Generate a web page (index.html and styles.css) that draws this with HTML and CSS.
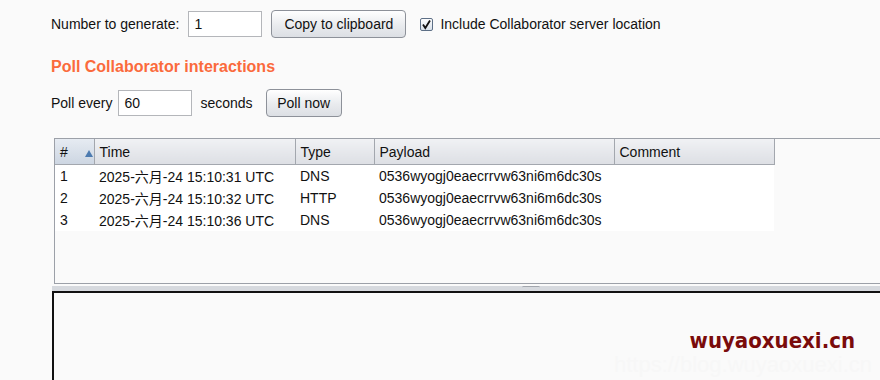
FILE: index.html
```html
<!DOCTYPE html>
<html lang="zh-CN">
<head>
  <meta charset="UTF-8">
  <title>Burp Collaborator client</title>
  <link rel="stylesheet" href="styles.css">
</head>
<body>
  <div class="top">
    <!-- 生成 payload -->
    <div class="row gen-row">
      <span>Number to generate:</span>
      <input class="field field-num" type="text" value="1">
      <button class="btn btn-copy">Copy to clipboard</button>
      <span class="check">
        <svg width="11" height="11" viewBox="0 0 11 11"><path d="M2 5.5 L4.3 9 L9 1.5" fill="none" stroke="#111" stroke-width="1.8"/></svg>
      </span>
      <span>Include Collaborator server location</span>
    </div>

    <h2 class="title">Poll Collaborator interactions</h2>

    <div class="row poll-row">
      <span>Poll every</span>
      <input class="field field-poll" type="text" value="60">
      <span>seconds</span>
      <button class="btn btn-poll">Poll now</button>
    </div>
  </div>

  <!-- 交互列表 -->
  <div class="list-pane">
    <table class="grid">
      <colgroup>
        <col class="c-num"><col class="c-time"><col class="c-type"><col class="c-payload"><col class="c-comment">
      </colgroup>
      <thead>
        <tr>
          <th class="sorted"># <span class="arrow"></span></th>
          <th>Time</th>
          <th>Type</th>
          <th>Payload</th>
          <th>Comment</th>
        </tr>
      </thead>
      <tbody>
        <tr><td>1</td><td>2025-六月-24 15:10:31 UTC</td><td>DNS</td><td>0536wyogj0eaecrrvw63ni6m6dc30s</td><td></td></tr>
        <tr><td>2</td><td>2025-六月-24 15:10:32 UTC</td><td>HTTP</td><td>0536wyogj0eaecrrvw63ni6m6dc30s</td><td></td></tr>
        <tr><td>3</td><td>2025-六月-24 15:10:36 UTC</td><td>DNS</td><td>0536wyogj0eaecrrvw63ni6m6dc30s</td><td></td></tr>
      </tbody>
    </table>
  </div>

  <div class="divider"><span class="grip"></span></div>

  <!-- 详情 -->
  <div class="detail-pane">
    <div class="mark">wuyaoxuexi.cn</div>
    <div class="mark-url">https://blog.wuyaoxuexi.cn</div>
  </div>
</body>
</html>
```

FILE: styles.css
```css
html, body {
    margin: 0;
    height: 380px;
    overflow: hidden;
}
body {
    background: #fafafa;
    font-family: "Liberation Sans", Arial, "Noto Sans CJK SC", sans-serif;
    font-size: 14px;
    color: #111;
}

.top {
    padding: 10px 0 0 51px;
}
.row {
    display: flex;
    align-items: center;
    height: 28px;
}
.gen-row span:first-child { margin-right: 9px; }

.field {
    box-sizing: border-box;
    height: 26px;
    border: 1px solid #b4b6ba;
    background: #fff;
    font: inherit;
    padding: 0 5px;
    color: #111;
    outline: none;
}
.field-num { width: 74px; margin-right: 9px; }
.field-poll { width: 74px; margin: 0 8px 0 6px; }

.btn {
    box-sizing: border-box;
    height: 28px;
    padding: 0 6px;
    border: 1px solid #8d9199;
    border-radius: 4px;
    background: linear-gradient(#ffffff, #e9ebee 55%, #dcdfe4);
    font: inherit;
    color: #111;
}
.btn-copy { width: 135px; margin-right: 14px; }
.btn-poll { width: 76px; margin-left: 13px; }

.check {
    box-sizing: border-box;
    width: 13px;
    height: 13px;
    border: 1px solid #5d6f86;
    border-radius: 2px;
    background: linear-gradient(#fdfdfe, #d9e1ea);
    display: flex;
    align-items: center;
    justify-content: center;
    margin-right: 7px;
}

.title {
    margin: 0;
    padding: 19px 0 0;
    height: 38px;
    line-height: 19px;
    box-sizing: border-box;
    font-size: 16px;
    font-weight: bold;
    color: #fa6a3c;
}
.poll-row { margin-top: 13px; }

/* 列表区域 */
.list-pane {
    margin: 21px 0 0 54px;
    width: 840px;
    height: 146px;
    box-sizing: border-box;
    border: 1px solid #9ca0a8;
}
.grid {
    border-collapse: collapse;
    table-layout: fixed;
    width: 719px;
}
.c-num { width: 39px; }
.c-time { width: 201px; }
.c-type { width: 79px; }
.c-payload { width: 240px; }
.c-comment { width: 160px; }

.grid th {
    height: 25px;
    padding: 0 0 0 5px;
    text-align: left;
    font-weight: normal;
    border-right: 1px solid #a3a7ae;
    border-bottom: 1px solid #a3a7ae;
    background: linear-gradient(#f0f1f4, #dddfe4);
}
.grid th.sorted {
    background: linear-gradient(#e6ebf2, #cdd6e2);
}
.arrow {
    display: inline-block;
    margin-left: 13px;
    width: 0;
    height: 0;
    border-left: 4px solid transparent;
    border-right: 4px solid transparent;
    border-bottom: 7px solid #4d7bb0;
}
.grid td {
    height: 22px;
    padding: 0 0 0 5px;
    background: #fff;
    white-space: nowrap;
}

.divider {
    margin: 2px 0 0 52px;
    height: 5px;
    background: #d6d9de;
    position: relative;
}
.grip {
    position: absolute;
    left: 470px;
    top: 0;
    width: 18px;
    height: 2px;
    border-top: 1px solid #a2a6ad;
    border-radius: 2px;
}

.detail-pane {
    margin-left: 52px;
    height: 89px;
    box-sizing: border-box;
    border-top: 2px solid #111;
    border-left: 2px solid #111;
    display: flex;
    flex-direction: column;
    align-items: flex-end;
    padding: 36px 25px 0 0;
}
.mark {
    font-family: "DejaVu Sans Condensed", "DejaVu Sans", sans-serif;
    font-weight: bold;
    font-size: 22px;
    color: #7a0b0b;
    line-height: 24px;
}
.mark-url {
    font-size: 22px;
    color: #f7f7f7;
    line-height: 24px;
    margin-right: -17px;
}
```
